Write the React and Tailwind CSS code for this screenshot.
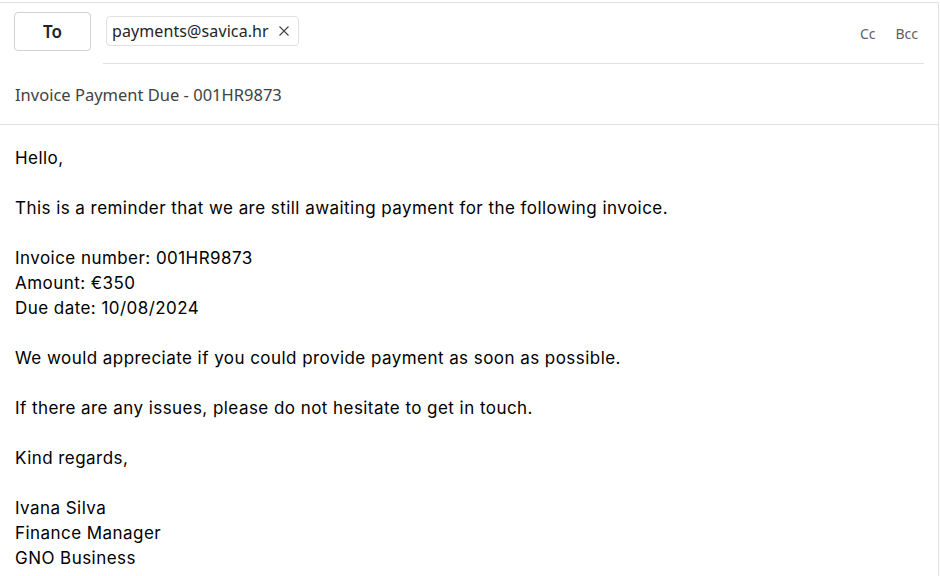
import React from "react";

const ui = { fontFamily: '"Noto Sans", "Open Sans", sans-serif' };
const body = { fontFamily: 'Inter, "Noto Sans", sans-serif' };

export default function App() {
  const lines = [
    "Hello,",
    "",
    "This is a reminder that we are still awaiting payment for the following invoice.",
    "",
    "Invoice number: 001HR9873",
    "Amount: €350",
    "Due date: 10/08/2024",
    "",
    "We would appreciate if you could provide payment as soon as possible.",
    "",
    "If there are any issues, please do not hesitate to get in touch.",
    "",
    "Kind regards,",
    "",
    "Ivana Silva",
    "Finance Manager",
    "GNO Business",
  ];
  return (
    <div className="w-[940px] h-[576px] bg-white overflow-hidden pt-[2px]">
      <div className="w-[939px] h-[574px] border-t border-r border-[#e0e0e0]">
        <div className="flex items-start" style={ui}>
          <div className="pl-[14px] pt-[9px]">
            <div className="w-[77px] h-[39px] border border-[#d1d1d1] rounded-[4px] flex items-center justify-center text-[17px] font-semibold text-[#242424]">
              To
            </div>
          </div>
          <div className="flex-1 ml-[12px] mr-[14px]">
            <div className="h-[61px] border-b border-[#e0e0e0] flex items-start pt-[13px]">
              <div className="ml-[3px] h-[30px] border border-[#e0e0e0] rounded-[4px] flex items-center pl-[5px] pr-[8px] gap-[9px] text-[16px] text-[#242424]">
                <span className="tracking-[0.1px]">payments@savica.hr</span>
                <svg width="12" height="12" viewBox="0 0 12 12" className="text-[#424242]">
                  <path d="M1.5 1.5 L10.5 10.5 M10.5 1.5 L1.5 10.5" stroke="currentColor" strokeWidth="1.1" fill="none" />
                </svg>
              </div>
              <div className="ml-auto flex gap-[20px] text-[14px] text-[#616161] pt-[7px] pr-[6px]">
                <span>Cc</span>
                <span>Bcc</span>
              </div>
            </div>
          </div>
        </div>
        <div
          className="h-[61px] border-b border-[#e0e0e0] pl-[15px] pt-[3px] flex items-center text-[16.5px] text-[#424242]"
          style={ui}
        >
          Invoice Payment Due - 001HR9873
        </div>
        <div className="pl-[15px] pt-[21px] text-[17px] tracking-[0.45px] leading-[25px] text-black" style={body}>
          {lines.map((l, i) => (
            <div key={i} className="h-[25px]">
              {l}
            </div>
          ))}
        </div>
      </div>
    </div>
  );
}
